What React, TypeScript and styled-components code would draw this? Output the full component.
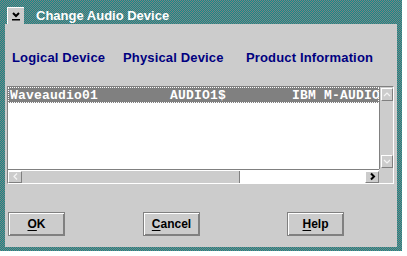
// ChangeAudioDevice - OS/2 style "Change Audio Device" dialog

import React from 'react';
import styled, { createGlobalStyle } from 'styled-components';

type Direction = 'up' | 'down' | 'left' | 'right';

interface DeviceEntry {
  logical: string;
  physical: string;
  product: string;
}

const devices: DeviceEntry[] = [
  { logical: 'Waveaudio01', physical: 'AUDIO1$', product: 'IBM M-AUDIO' },
];

const GlobalStyle = createGlobalStyle`
	html, body {
		margin: 0;
		padding: 0;
		background: #ffffff;
	}

	body {
		font-family: "Liberation Sans", Arial, sans-serif;
	}
`;

const Window = styled.div`
	width: 402px;
	height: 251px;
	box-sizing: border-box;
	padding: 0 5px 4px 5px;
	display: flex;
	flex-direction: column;
	background-color: #808080;
	background-image: conic-gradient(#108c8c 0 25%, transparent 0 50%, #108c8c 0 75%, transparent 0);
	background-size: 2px 2px;
`;

const TitleBar = styled.div`
	height: 24px;
	display: flex;
	align-items: flex-end;
	gap: 12px;
	padding-left: 2px;
`;

const SystemMenuButton = styled.div`
	width: 17px;
	height: 17px;
	box-sizing: border-box;
	background: #cccccc;
	border-top: 1px solid #ffffff;
	border-left: 1px solid #ffffff;
	display: flex;
	align-items: center;
	justify-content: center;
`;

const TitleText = styled.div`
	font-size: 13px;
	line-height: 17px;
	font-weight: bold;
	color: #ffffff;
	white-space: nowrap;
`;

const Body = styled.div`
	flex: 1;
	background: #cccccc;
	display: flex;
	flex-direction: column;
	padding: 26px 3px 11px 2px;
`;

const HeaderRow = styled.div`
	display: grid;
	grid-template-columns: 111px 123px 1fr;
	padding-left: 5px;
	margin-bottom: 21px;
`;

const HeaderLabel = styled.div`
	font-size: 13px;
	line-height: 15px;
	font-weight: bold;
	color: #000080;
	letter-spacing: 0.15px;
	white-space: nowrap;
`;

const ListBox = styled.div`
	height: 98px;
	box-sizing: border-box;
	border-top: 1px solid #808080;
	border-left: 1px solid #808080;
	border-bottom: 1px solid #ffffff;
	border-right: 1px solid #ffffff;
	display: grid;
	grid-template-columns: 1fr 14px;
	grid-template-rows: 1fr 14px;
`;

const ListArea = styled.div`
	background: #ffffff;
	overflow: hidden;
`;

const ListRow = styled.div<{ $selected: boolean }>`
	height: 16px;
	box-sizing: border-box;
	border: 1px dotted ${(props) => (props.$selected ? '#ffffff' : 'transparent')};
	background: ${(props) => (props.$selected ? '#808080' : 'transparent')};
	color: ${(props) => (props.$selected ? '#ffffff' : '#000000')};
	display: grid;
	grid-template-columns: 160px 122px max-content;
	padding: 1px 0 0 1px;
	font-family: "Liberation Mono", "Courier New", monospace;
	font-weight: bold;
	font-size: 13px;
	line-height: 14px;
	letter-spacing: 0.2px;
	white-space: nowrap;
`;

const Cell = styled.span``;

const VScroll = styled.div`
	background: #cccccc;
	border-left: 1px solid #808080;
	padding: 1px 0 1px 1px;
	display: flex;
	flex-direction: column;
`;

const VTrack = styled.div`
	flex: 1;
	background: #cccccc;
`;

const HScroll = styled.div`
	background: #ffffff;
	border-top: 1px solid #808080;
	display: flex;
	align-items: center;
`;

const HThumb = styled.div`
	width: 218px;
	height: 12px;
	box-sizing: border-box;
	background: #cccccc;
	border-right: 1px solid #808080;
`;

const HTrack = styled.div`
	flex: 1;
	height: 12px;
	background: #ffffff;
`;

const Corner = styled.div`
	background: #cccccc;
`;

const ScrollButton = styled.div<{ $vertical?: boolean }>`
	width: ${(props) => (props.$vertical ? '12px' : '14px')};
	height: ${(props) => (props.$vertical ? '13px' : '12px')};
	box-sizing: border-box;
	background: #cccccc;
	border-top: 1px solid #ffffff;
	border-left: 1px solid #ffffff;
	border-bottom: 1px solid #808080;
	border-right: 1px solid #808080;
	display: flex;
	align-items: center;
	justify-content: center;
`;

const ButtonRow = styled.div`
	display: flex;
	padding-left: 1px;
	margin-top: 28px;
`;

const PushButton = styled.button<{ $offset: number }>`
	width: 57px;
	height: 24px;
	margin-left: ${(props) => props.$offset}px;
	padding: 0;
	box-sizing: border-box;
	background: #cccccc;
	border: 1px solid #808080;
	box-shadow: inset 1px 1px #ffffff, inset -1px -1px #808080;
	font-family: "Liberation Sans", Arial, sans-serif;
	font-size: 12px;
	font-weight: bold;
	color: #000000;
	cursor: pointer;
`;

const Mnemonic = styled.span`
	text-decoration: underline;
	text-underline-offset: 2px;
`;

const arrowPoints: Record<Direction, string> = {
  up: '2,6 5,3 8,6',
  down: '2,3 5,6 8,3',
  left: '6,1.5 3,4.5 6,7.5',
  right: '3,1.5 6,4.5 3,7.5',
};

const Arrow: React.FC<{ dir: Direction; color: string; bold?: boolean }> = ({
  dir,
  color,
  bold,
}) => {
  const vertical = dir === 'up' || dir === 'down';
  return (
    <svg width={vertical ? 10 : 9} height={9} viewBox={vertical ? '0 0 10 9' : '0 0 9 9'}>
      <polyline points={arrowPoints[dir]} fill="none" stroke={color} strokeWidth={bold ? 2 : 1.2} />
    </svg>
  );
};

const SystemMenuIcon: React.FC = () => (
  <svg width="13" height="13" viewBox="0 0 13 13">
    <polyline points="3,3 6,6 9,3" fill="none" stroke="#000000" strokeWidth="2" />
    <rect x="2" y="9" width="8" height="1.5" fill="#000000" />
  </svg>
);

export default function App() {
  return (
    <>
      <GlobalStyle />
      <Window>
        {/* Title bar */}
        <TitleBar>
          <SystemMenuButton>
            <SystemMenuIcon />
          </SystemMenuButton>
          <TitleText>Change Audio Device</TitleText>
        </TitleBar>

        <Body>
          {/* Column headers */}
          <HeaderRow>
            <HeaderLabel>Logical Device</HeaderLabel>
            <HeaderLabel>Physical Device</HeaderLabel>
            <HeaderLabel>Product Information</HeaderLabel>
          </HeaderRow>

          {/* Device list */}
          <ListBox>
            <ListArea>
              {devices.map((device, i) => (
                <ListRow key={device.logical} $selected={i === 0}>
                  <Cell>{device.logical}</Cell>
                  <Cell>{device.physical}</Cell>
                  <Cell>{device.product}</Cell>
                </ListRow>
              ))}
            </ListArea>
            <VScroll>
              <ScrollButton $vertical>
                <Arrow dir="up" color="#f4f4f4" />
              </ScrollButton>
              <VTrack />
              <ScrollButton $vertical>
                <Arrow dir="down" color="#f4f4f4" />
              </ScrollButton>
            </VScroll>
            <HScroll>
              <ScrollButton>
                <Arrow dir="left" color="#f4f4f4" />
              </ScrollButton>
              <HThumb />
              <HTrack />
              <ScrollButton>
                <Arrow dir="right" color="#000000" bold />
              </ScrollButton>
            </HScroll>
            <Corner />
          </ListBox>

          {/* Dialog buttons */}
          <ButtonRow>
            <PushButton type="button" $offset={0}>
              <Mnemonic>O</Mnemonic>K
            </PushButton>
            <PushButton type="button" $offset={78}>
              <Mnemonic>C</Mnemonic>ancel
            </PushButton>
            <PushButton type="button" $offset={87}>
              <Mnemonic>H</Mnemonic>elp
            </PushButton>
          </ButtonRow>
        </Body>
      </Window>
    </>
  );
}
